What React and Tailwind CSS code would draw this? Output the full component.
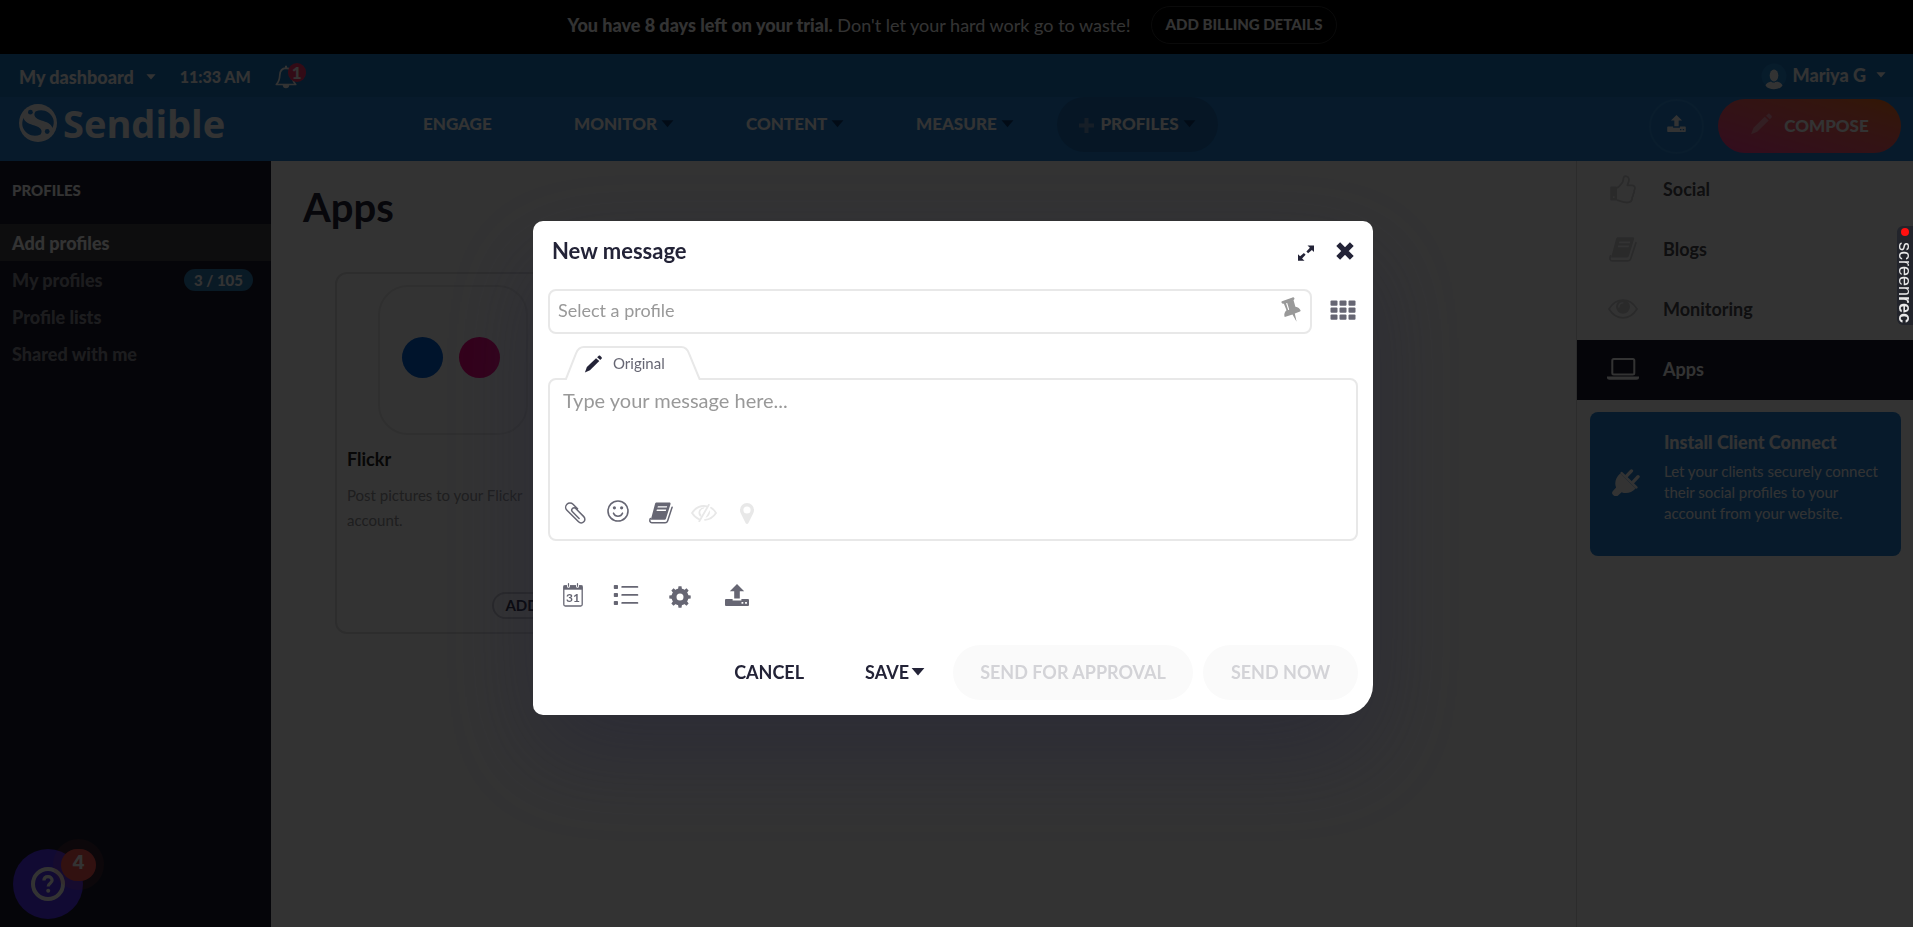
import React, { useState } from "react";

/* ---------- icons ---------- */

const Caret = ({ className = "" }) => (
  <svg className={className} viewBox="0 0 14 8" fill="currentColor" aria-hidden="true">
    <path d="M0.6 0h12.8L7 7.6z" />
  </svg>
);

const PencilIcon = ({ className = "" }) => (
  <svg className={className} viewBox="0 0 20 20" fill="currentColor" aria-hidden="true">
    <path d="M1 19.4l2.2-6L13.4 3.5l3.6 3.3L6.6 17z" />
    <path d="M14.6 2.4l1.8-1.6c.5-.4 1-.4 1.500 0l1.700 1.700c.4.500.4 1 0 1.500l-1.500 1.600z" />
  </svg>
);

const UploadIcon = ({ className = "" }) => (
  <svg className={className} viewBox="0 0 24 22" fill="currentColor" aria-hidden="true">
    <path d="M12 0l7.200 7.200h-4.400v7.400H9.200V7.200H4.800z" />
    <path
      fillRule="evenodd"
      d="M1 15h6.600v1.400h8.800V15H23a1 1 0 0 1 1 1v5a1 1 0 0 1-1 1H1a1 1 0 0 1-1-1v-5a1 1 0 0 1 1-1zm15.500 3v1.800h1.800V18zm3.600 0v1.800h1.800V18z"
    />
  </svg>
);

const BookIcon = ({ className = "" }) => (
  <svg className={className} viewBox="0 0 24 22" fill="currentColor" aria-hidden="true">
    <path
      fillRule="evenodd"
      d="M7.500.5h12.800c1 0 1.500.7 1.200 1.700l-4.400 14.100c-.3 1-.9 1.500-2 1.500H1.800L6 2c.300-1 .700-1.500 1.500-1.500zM8.900 4.200l-.4 1.400h9.300l.4-1.400zM7.900 7.600l-.4 1.400h9.300l.4-1.400z"
    />
    <path
      fill="none"
      stroke="currentColor"
      strokeWidth="1.500"
      strokeLinecap="round"
      strokeLinejoin="round"
      d="M1.300 16.500c-1 2.400-.400 4.300 1.600 4.300h13.200c1.300 0 2.100-.7 2.500-1.900L23.100 5.200"
    />
  </svg>
);

const EyeIcon = ({ className = "" }) => (
  <svg className={className} viewBox="0 0 30 20" fill="none" stroke="currentColor" aria-hidden="true">
    <path strokeWidth="1.800" d="M1 10C4.500 4.300 9.300 1.200 15 1.200S25.500 4.300 29 10c-3.500 5.700-8.300 8.800-14 8.800S4.500 15.700 1 10z" />
    <circle cx="15" cy="7.800" r="7" fill="currentColor" stroke="none" />
    <path stroke="#fff" strokeWidth="1.300" strokeLinecap="round" d="M10.800 8c0-2.400 1.700-4.200 4.100-4.200" />
  </svg>
);

const EyeSlashIcon = ({ className = "" }) => (
  <svg className={className} viewBox="0 0 26 18" fill="none" stroke="currentColor" aria-hidden="true">
    <path strokeWidth="1.800" strokeLinecap="round" d="M8.600 15.500C5.500 14.400 3 12 1 9c3-4.700 7-7 12-7 1 0 2 .1 3 .3M20 3.800c2 1.200 3.700 3 5 5.200-2.700 4.200-6.300 6.500-11 6.900" />
    <path fill="currentColor" stroke="none" d="M13.600 3.200A5.700 5.700 0 0 0 9.300 13l1.200-2.100a4 4 0 0 1-1-4 4 4 0 0 1 3.400-2.400z" />
    <path fill="currentColor" stroke="none" d="M18.700 6.300c.9 3.400-.7 6.300-4.200 7.500z" />
    <path strokeWidth="1.800" strokeLinecap="round" d="M17.800.9L8.300 17.300" />
  </svg>
);

const ThumbIcon = ({ className = "" }) => (
  <svg className={className} viewBox="0 0 27 30" fill="none" stroke="currentColor" strokeWidth="1.900" strokeLinejoin="round" aria-hidden="true">
    <path d="M1.200 12.800h5.200v12.600H1.200z" fill="currentColor" />
    <path d="M7 13.300c2.500-.500 4-3 5.700-5.300 1.200-1.700.9-4.200 1.700-5.800.7-1.500 4.700-1.200 5.200 1.700.5 2.600-1 4.500-1.500 6.900h5c1.800 0 2.900 1.300 2.800 2.900-.1 1.200-.4 1.700-.8 2.200.2 1.700-.1 2.800-1 3.800.1 1.500-.200 2.500-1.100 3.400.2 3.200-1.200 4.900-4 5.300-3.800.5-6.500-.7-9-1.600-1.100-.400-2-.7-3-.8" />
    <circle cx="3.900" cy="22.900" r="1" fill="#fff" stroke="none" />
  </svg>
);

const LaptopIcon = ({ className = "" }) => (
  <svg className={className} viewBox="0 0 32 22" fill="currentColor" aria-hidden="true">
    <rect x="5.300" y="1" width="22" height="15.500" rx="1.500" fill="none" stroke="currentColor" strokeWidth="2" />
    <path d="M0 18.400h32v1.400c0 1.200-1 1.900-2.500 1.900h-27C1 21.700 0 21 0 19.800z" />
  </svg>
);

const PlugIcon = ({ className = "" }) => (
  <svg className={className} viewBox="0 0 30 28" fill="currentColor" aria-hidden="true">
    <path d="M9.500 4.800l16 15.500c-4.500 5-10.500 5.500-14.500 3.700l-4 3.600c-1.500 1.200-3.500.7-4.800-.6-1.400-1.400-1.400-2.900-.2-4.200l3.300-3.500C3.300 14.500 4.800 9 9.500 4.800z" transform="translate(0 .5)" />
    <path d="M11 4.800l15.300 14.700" stroke="currentColor" strokeWidth="2.600" strokeLinecap="round" />
    <path d="M16 8l5.200-5.500M22.500 14.300L28 8.500" stroke="currentColor" strokeWidth="3.400" strokeLinecap="round" />
  </svg>
);

const BellIcon = ({ className = "" }) => (
  <svg className={className} viewBox="0 0 22 24" fill="none" stroke="currentColor" strokeWidth="1.700" strokeLinejoin="round" aria-hidden="true">
    <path d="M11 3.200c-4 .2-6 3-6.200 7-.2 4.500-1.300 7-3.500 9.300h19.400c-2.200-2.300-3.300-4.800-3.500-9.300-.2-4-2.200-6.800-6.200-7z" />
    <path d="M7.700 20h6.600c0 2-1.400 3.300-3.300 3.300S7.700 22 7.700 20zM10 0.800h2v2.400h-2z" fill="currentColor" stroke="none" />
  </svg>
);

const PaperclipIcon = ({ className = "" }) => (
  <svg className={className} viewBox="0 0 21 22" fill="none" stroke="currentColor" strokeWidth="1.500" strokeLinecap="round" aria-hidden="true">
    <path
      transform="translate(11.500 11) rotate(-45) translate(0 -12.600)"
      d="M4.500 11V4.600a4.300 4.300 0 0 0-8.600 0V21a3.700 3.700 0 0 0 7.400 0V9.600a2.300 2.300 0 0 0-4.600 0V19"
    />
  </svg>
);

const SmileIcon = ({ className = "" }) => (
  <svg className={className} viewBox="0 0 22 22" fill="none" stroke="currentColor" strokeWidth="1.600" strokeLinecap="round" aria-hidden="true">
    <circle cx="11" cy="11" r="10" />
    <circle cx="7.400" cy="7.800" r="1.600" fill="currentColor" stroke="none" />
    <circle cx="14.600" cy="7.800" r="1.600" fill="currentColor" stroke="none" />
    <path d="M6.500 13.200c.8 2 2.400 3 4.500 3s3.700-1 4.500-3" />
  </svg>
);

const MarkerIcon = ({ className = "" }) => (
  <svg className={className} viewBox="0 0 14 21" fill="currentColor" aria-hidden="true">
    <path
      fillRule="evenodd"
      d="M7 0a7 7 0 0 1 7 7c0 1.200-.2 2-.6 2.900L8.300 20.200c-.5 1-2.100 1-2.600 0L.6 9.900C.2 9 0 8.200 0 7a7 7 0 0 1 7-7zm0 3.400a3.600 3.600 0 1 0 0 7.200 3.600 3.600 0 0 0 0-7.200z"
    />
  </svg>
);

const PinIcon = ({ className = "" }) => (
  <svg className={className} viewBox="0 0 20 25" fill="currentColor" aria-hidden="true">
    <path
      fillRule="evenodd"
      d="M1 4.200L11.500.4c1-.3 1.700.2 1.900.9.200.8-.1 1.300-.9 1.700l1.900 6.800c2.700.4 4.500 1.800 5.200 3.800.1.500-.1.800-.6 1l-5.200 1.900 1.800 8.200L11.500 17.400l-7 2.400c-.6.2-1 0-1.100-.500-.4-2.200.3-4.300 2.100-6L2.900 6.700C1.900 7 .9 6.700.6 5.800.3 5 .4 4.500 1 4.200zM5.600 6c-.4.1-.5.4-.4.700l1.900 6c.1.300.4.400.7.300s.4-.4.300-.7L6.300 6.300C6.200 6 5.900 5.900 5.600 6z"
    />
  </svg>
);

const GridIcon = ({ className = "" }) => (
  <svg className={className} viewBox="0 0 26 20" fill="currentColor" aria-hidden="true">
    {[0, 9, 18].map((x) =>
      [0, 7, 14].map((y) => <rect key={`${x}-${y}`} x={x + 0.5} y={y + 0.5} width="7" height="5.200" rx="1" />)
    )}
  </svg>
);

const GearIcon = ({ className = "" }) => (
  <svg className={className} viewBox="0 0 22 22" fill="currentColor" aria-hidden="true">
    <circle cx="11" cy="11" r="6" fill="none" stroke="currentColor" strokeWidth="5" />
    {[0, 45, 90, 135, 180, 225, 270, 315].map((angle) => (
      <path key={angle} d="M8.900 4.200L9.500.3h3l.6 3.900z" transform={`rotate(${angle} 11 11)`} />
    ))}
  </svg>
);

const CalendarIcon = ({ className = "" }) => (
  <svg className={className} viewBox="0 0 20 24" aria-hidden="true">
    <rect x=".8" y="2.800" width="18.400" height="20.200" rx="1.500" fill="none" stroke="currentColor" strokeWidth="1.300" />
    <path d="M.5 2.300h19v4.400H.5z" fill="currentColor" />
    <path d="M5.500 0v3.200M14.500 0v3.200" stroke="#fff" strokeWidth="3" strokeLinecap="round" />
    <path d="M5.500.6v2.600M14.500.6v2.600" stroke="currentColor" strokeWidth="1.200" strokeLinecap="round" />
    <text x="10" y="19.400" textAnchor="middle" fontSize="12" fontWeight="700" fontFamily="Lato, sans-serif" fill="currentColor">
      31
    </text>
  </svg>
);

const ListIcon = ({ className = "" }) => (
  <svg className={className} viewBox="0 0 25 22" fill="currentColor" aria-hidden="true">
    {[1, 9, 17].map((y) => (
      <g key={y}>
        <rect x=".3" y={y} width="4.200" height="4" rx=".8" />
        <rect x="7.800" y={y + 1} width="17" height="1.800" rx=".9" />
      </g>
    ))}
  </svg>
);

const ExpandIcon = ({ className = "" }) => (
  <svg className={className} viewBox="0 0 16 16" fill="currentColor" aria-hidden="true">
    <path d="M9.500.5H16V7l-2.100-2.100-3.800 3.300-1.700-1.700 3.500-3.700zM6.500 15.700H0V9.200l2.100 2.100 3.800-3.300 1.700 1.700-3.500 3.700z" />
  </svg>
);

const CloseIcon = ({ className = "" }) => (
  <svg className={className} viewBox="0 0 18 18" fill="none" stroke="currentColor" strokeWidth="5.400" aria-hidden="true">
    <path d="M2.200 2.200l13.600 13.600M15.800 2.200L2.200 15.800" />
  </svg>
);

const Logo = () => (
  <a href="#home" className="flex items-center gap-1.5 text-white">
    <svg className="size-[38px]" viewBox="0 0 38 38" aria-hidden="true">
      <circle cx="19" cy="19" r="19" fill="currentColor" />
      {/* the S is what stays between the two cut-outs */}
      <g fill="#2383d8">
        <path d="M16.500 7.500C23 4.500 31.500 7 34.300 15c.9 3 .4 6.500-.9 9-1.500-4.800-6-6-11-7.500-5.500-1.600-8.900-5-5.900-9z" />
        <path d="M16.500 7.500C23 4.500 31.500 7 34.300 15c.9 3 .4 6.500-.9 9-1.500-4.800-6-6-11-7.500-5.500-1.600-8.900-5-5.900-9z" transform="rotate(180 19 19)" />
        <circle cx="11.400" cy="8.200" r="2.400" />
        <circle cx="28.200" cy="27.500" r="2.400" />
      </g>
    </svg>
    <span className="font-['Open_Sans',sans-serif] text-[38px] leading-[38px] font-bold">Sendible</span>
  </a>
);

/* ---------- page ---------- */

const sideLinks = ["Add profiles", "My profiles", "Profile lists", "Shared with me"];

const categories = [
  { label: "Social", Icon: ThumbIcon, size: "w-[26px] h-[29px]" },
  { label: "Blogs", Icon: BookIcon, size: "w-[28px] h-[27px]" },
  { label: "Monitoring", Icon: EyeIcon, size: "w-[30px] h-[20px]" },
  { label: "Apps", Icon: LaptopIcon, size: "w-[32px] h-[22px]" },
];

const TrialBar = () => (
  <div className="flex h-[54px] shrink-0 items-start justify-center bg-black pt-1.5 pr-2 text-lg text-white">
    <p className="leading-[38px]">
      <strong className="font-black">You have 8 days left on your trial.</strong> Don't let your hard work go to waste!
    </p>
    <button className="ml-5 h-[38px] rounded-full border border-[#333] px-[14px] text-[15px] font-black">
      ADD BILLING DETAILS
    </button>
  </div>
);

const Header = () => (
  <header className="shrink-0 bg-[#2383d8] font-black text-white">
    <div className="flex h-[43px] items-center bg-[#1c78c3] pt-0.5 pr-[19px] pl-[19px]">
      <button className="flex items-center gap-3 text-lg">
        My dashboard <Caret className="h-[6px] w-[10px]" />
      </button>
      <span className="ml-6 text-base">11:33 AM</span>
      <button className="relative ml-6" aria-label="Notifications">
        <BellIcon className="h-6 w-[22px]" />
        <span className="absolute -top-[2px] left-[13px] flex h-[19px] w-[18px] items-center justify-center rounded-full bg-[#ff3b70] text-[17px] leading-none">
          1
        </span>
      </button>
      <button className="ml-auto flex items-center gap-1.5 pr-2 pb-1 text-lg">
        <svg className="mt-1 h-[27px] w-[26px]" viewBox="0 0 26 27" aria-hidden="true">
          <circle cx="13" cy="13" r="12.500" fill="#268ad6" />
          <ellipse cx="13" cy="12.500" rx="4.300" ry="6" fill="currentColor" />
          <path d="M4.500 22.500c1-3 4.500-3.500 5.500-4 1.500 1.600 4.500 1.600 6 0 1 .5 4.500 1 5.500 4-3 5-14 5-17 0z" fill="currentColor" />
        </svg>
        Mariya G <Caret className="ml-1 h-[6px] w-[10px]" />
      </button>
    </div>
    <div className="flex h-16 items-start pr-3 pl-[19px]">
      <div className="w-[404px] shrink-0 pt-[7px]">
        <Logo />
      </div>
      <nav className="grid h-[55px] grid-cols-[151px_172px_170px_141px_161px] items-center text-[17px]">
        <a href="#engage" className="pb-0.5">ENGAGE</a>
        {["MONITOR", "CONTENT", "MEASURE"].map((label) => (
          <button key={label} className="flex items-center gap-1 pb-0.5">
            {label} <Caret className="h-[8px] w-[13px] text-[#0a3a70]" />
          </button>
        ))}
        <button className="flex h-full items-center justify-center gap-1 rounded-full bg-[#1f70b8] pb-0.5">
          <svg className="mt-1 mr-0.5 size-[15px] text-[#6f97c2]" viewBox="0 0 15 15" fill="none" stroke="currentColor" strokeWidth="4" aria-hidden="true">
            <path d="M7.500 0v15M0 7.500h15" />
          </svg>
          PROFILES <Caret className="h-[8px] w-[13px] text-[#0a3a70]" />
        </button>
      </nav>
      <button className="mt-0.5 ml-auto flex size-[55px] items-center justify-center rounded-full border-2 border-[#3290de] pb-1.5" aria-label="Upload">
        <UploadIcon className="h-[17px] w-[19px]" />
      </button>
      <button className="mt-0.5 ml-[14px] flex h-[54px] w-[183px] items-center justify-center gap-3 rounded-full bg-linear-to-tr from-[#ff3c96] to-[#ff7300] text-[17px]">
        <PencilIcon className="mb-1 size-[22px] text-[#ff9bb0]" />
        COMPOSE
      </button>
    </div>
  </header>
);

const Sidebar = () => (
  <aside className="w-[271px] shrink-0 bg-[#1c1c2e] font-black text-[#8e8e98]">
    <h2 className="h-[63px] px-3 text-[15px] leading-[58px] text-white">PROFILES</h2>
    <nav className="text-lg">
      {sideLinks.map((label, i) => (
        <a
          key={label}
          href="#profiles"
          className={i === 0 ? "flex h-[37px] items-center bg-[#424249] px-3 text-white" : "flex h-[37px] items-center px-3"}
        >
          {label}
          {i === 1 && (
            <span className="mr-1.5 ml-auto flex h-[22px] w-[69px] items-center justify-center rounded-full bg-[#2f80b8] pt-0.5 text-[15px] text-white">
              3 / 105
            </span>
          )}
        </a>
      ))}
    </nav>
  </aside>
);

const AppsContent = () => (
  <main className="min-w-0 flex-1 px-8">
    <h1 className="mt-[22px] text-[40px] leading-[48px] font-bold text-[#232337]">Apps</h1>
    <article className="mt-[41px] ml-8 flex h-[362px] w-[235px] flex-col rounded-xl border-2 border-[#dedee0] px-2.5 pt-[11px] pb-[13px]">
      <div className="mx-auto flex size-[150px] items-center justify-center gap-4 rounded-[30px] border-2 border-[#eaeaea] pr-1 pb-1.5">
        <span className="size-[41px] rounded-full bg-[#0063dc]" />
        <span className="size-[41px] rounded-full bg-[#ff0084]" />
      </div>
      <h3 className="mt-2.5 text-lg font-bold text-[#232323]">Flickr</h3>
      <p className="mt-2.5 text-[15px] leading-[25px] text-[#96969a]">Post pictures to your Flickr account.</p>
      <button className="mt-auto mr-1.5 h-[27px] w-[60px] self-end rounded-full border-2 border-[#c9c9ce] text-[15px] leading-none font-bold text-[#232337]">
        ADD
      </button>
    </article>
  </main>
);

const CategoryPanel = () => (
  <aside className="w-[337px] shrink-0 border-l border-[#dadada]">
    <nav className="-mt-px">
      {categories.map(({ label, Icon, size }) => (
        <a
          key={label}
          href="#category"
          className={
            label === "Apps"
              ? "flex h-[60px] items-center bg-[#1c1c2e] pb-0.5 pl-[30px] text-lg font-bold text-white"
              : "flex h-[60px] items-center pb-0.5 pl-[30px] text-lg font-bold text-[#4b4b50]"
          }
        >
          <span className={label === "Apps" ? "flex w-8 justify-center" : "flex w-8 justify-center text-[#d0d0d3]"}>
            <Icon className={size} />
          </span>
          <span className="ml-6">{label}</span>
        </a>
      ))}
    </nav>
    <a href="#connect" className="mt-3 mr-3 ml-[13px] flex h-[144px] rounded-lg bg-[#2383d8] pt-[18px] pr-4 pl-[21px] text-white">
      <PlugIcon className="mt-[38px] h-7 w-[29px] shrink-0" />
      <span className="ml-6">
        <strong className="block text-lg leading-6 font-black">Install Client Connect</strong>
        <span className="mt-[7px] block text-[15px] leading-[21px]">
          Let your clients securely connect their social profiles to your account from your website.
        </span>
      </span>
    </a>
  </aside>
);

const HelpBubble = () => (
  <button className="absolute bottom-2 left-[13px] flex size-[70px] items-center justify-center rounded-full bg-[#5533ff] text-white" aria-label="Help">
    <svg className="size-[34px]" viewBox="0 0 34 34" fill="none" stroke="currentColor" aria-hidden="true">
      <circle cx="17" cy="17" r="15" strokeWidth="4" />
      <path d="M12.900 13.600c0-2.700 1.800-4 4.100-4s4.100 1.500 4.100 3.700c0 3-3.800 3-3.900 6.200" strokeWidth="3.200" />
      <circle cx="17.200" cy="23.800" r="2" fill="currentColor" stroke="none" />
    </svg>
    <span className="absolute -top-[10px] left-10 flex size-[51px] items-center justify-center rounded-full bg-[#fa5550]/15">
      <span className="flex h-[32px] w-[35px] items-center justify-center rounded-full bg-[#fa5550] pb-0.5 font-['Inter',sans-serif] text-[19px] font-bold">
        4
      </span>
    </span>
  </button>
);

/* ---------- compose dialog ---------- */

const ComposeDialog = () => {
  const [message, setMessage] = useState("");

  return (
    <div
      role="dialog"
      aria-labelledby="compose-title"
      className="w-[840px] rounded-[10px] rounded-br-[30px] bg-white px-[15px] pb-[15px] text-[#232337] shadow-[0_40px_100px_rgba(35,35,55,0.5)]"
    >
      <div className="flex h-[60px] items-center pr-1 pl-1">
        <h2 id="compose-title" className="mb-0.5 text-[22px] font-bold">New message</h2>
        <button className="mt-1 ml-auto" aria-label="Expand">
          <ExpandIcon className="size-4" />
        </button>
        <button className="ml-[22px]" aria-label="Close">
          <CloseIcon className="size-[18px]" />
        </button>
      </div>

      <div className="mt-2 flex items-center">
        <div className="flex h-[45px] w-[764px] rounded-lg border-2 border-[#e8e8e8] pr-[9px]">
          <input
            aria-label="Select a profile"
            placeholder="Select a profile"
            className="min-w-0 flex-1 px-2 pb-1 text-lg outline-none placeholder:text-[#999]"
          />
          <button aria-label="Pin profiles" className="mb-1 text-[#999]">
            <PinIcon className="h-[25px] w-5" />
          </button>
        </div>
        <button aria-label="All profiles" className="mb-1 ml-[18px] text-[#666673]">
          <GridIcon className="h-5 w-[26px]" />
        </button>
      </div>

      <div className="relative z-10 mt-3 -mb-0.5 ml-[17px] h-[34px] w-[136px]">
        <svg className="absolute inset-0 size-full" viewBox="0 0 137 34" aria-hidden="true">
          <path d="M0 31.500h1.500L11 7.500C12.800 3 15.200 1 19 1h98c4 0 6.300 2 8 6.500l9.500 24.500H137V34H0z" fill="#fff" />
          <path d="M0 33h1L11 7.500C12.800 3 15.200 1 19 1h98c4 0 6.300 2 8 6.500L135.500 33h1.500" fill="none" stroke="#e8e8e8" strokeWidth="2" />
        </svg>
        <button className="relative flex h-full w-full items-center gap-[11px] pt-[1px] pl-[19px] text-[15px] text-[#666673]">
          <PencilIcon className="size-[18px] text-[#232337]" />
          Original
        </button>
      </div>

      <div className="flex h-[163px] flex-col rounded-lg border-2 border-[#e8e8e8]">
        <textarea
          aria-label="Message"
          value={message}
          onChange={(e) => setMessage(e.target.value)}
          placeholder="Type your message here..."
          className="min-h-0 flex-1 resize-none px-[13px] pt-1.5 text-xl outline-none placeholder:text-[#999]"
        />
        <div className="flex h-[52px] items-center pl-[3px] text-[#666673]">
          <button aria-label="Attach" className="flex w-[43px] justify-center">
            <PaperclipIcon className="h-[22px] w-[21px] overflow-visible" />
          </button>
          <button aria-label="Emoji" className="mb-1 flex w-[43px] justify-center">
            <SmileIcon className="size-[22px]" />
          </button>
          <button aria-label="Content library" className="flex w-[43px] justify-center">
            <BookIcon className="h-[22px] w-6" />
          </button>
          <button aria-label="Hide preview" disabled className="flex w-[43px] justify-center text-[#e8e8e8]">
            <EyeSlashIcon className="h-[18px] w-[26px]" />
          </button>
          <button aria-label="Location" disabled className="flex w-[43px] justify-center text-[#e8e8e8]">
            <MarkerIcon className="h-[21px] w-[14px]" />
          </button>
        </div>
      </div>

      <div className="flex h-[104px] items-center gap-[30px] pt-1 pl-[15px] text-[#666673]">
        <button aria-label="Schedule">
          <CalendarIcon className="h-6 w-5" />
        </button>
        <button aria-label="Queue">
          <ListIcon className="h-[22px] w-[26px]" />
        </button>
        <button aria-label="Settings" className="mt-1">
          <GearIcon className="size-[22px]" />
        </button>
        <button aria-label="Upload" className="ml-1">
          <UploadIcon className="h-[22px] w-6" />
        </button>
      </div>

      <div className="flex h-[55px] items-center justify-end text-lg font-bold">
        <button className="mr-[61px] pb-0.5">CANCEL</button>
        <button className="mr-7 flex items-center gap-[2px] pb-0.5">
          SAVE <Caret className="h-[8px] w-[14px]" />
        </button>
        <button disabled className="mr-2.5 h-full w-[240px] rounded-full bg-[#fafafa] pb-0.5 text-[#d3d3d7]">
          SEND FOR APPROVAL
        </button>
        <button disabled className="h-full w-[155px] rounded-full bg-[#fafafa] pb-0.5 text-[#d3d3d7]">
          SEND NOW
        </button>
      </div>
    </div>
  );
};

const RecorderTab = () => (
  <div className="fixed top-[226px] right-0 flex h-[99px] w-4 flex-col items-center rounded-l-md bg-[#22242b] pt-0.5">
    <span className="size-2 shrink-0 rounded-full bg-[#ff0f0f]" />
    <span className="mt-1.5 font-['Liberation_Sans',sans-serif] text-lg leading-4 text-[#e8e8e8] [writing-mode:vertical-rl]">
      screen<b>rec</b>
    </span>
  </div>
);

const App = () => {
  return (
    <div className="relative flex h-screen flex-col overflow-hidden bg-white font-['Lato',sans-serif]">
      <TrialBar />
      <Header />
      <div className="flex min-h-0 flex-1">
        <Sidebar />
        <AppsContent />
        <CategoryPanel />
      </div>
      <HelpBubble />

      <div className="fixed inset-0 flex items-start justify-center bg-black/80 pt-[221px] pr-[7px]">
        <ComposeDialog />
      </div>
      <RecorderTab />
    </div>
  );
};

export default App;
